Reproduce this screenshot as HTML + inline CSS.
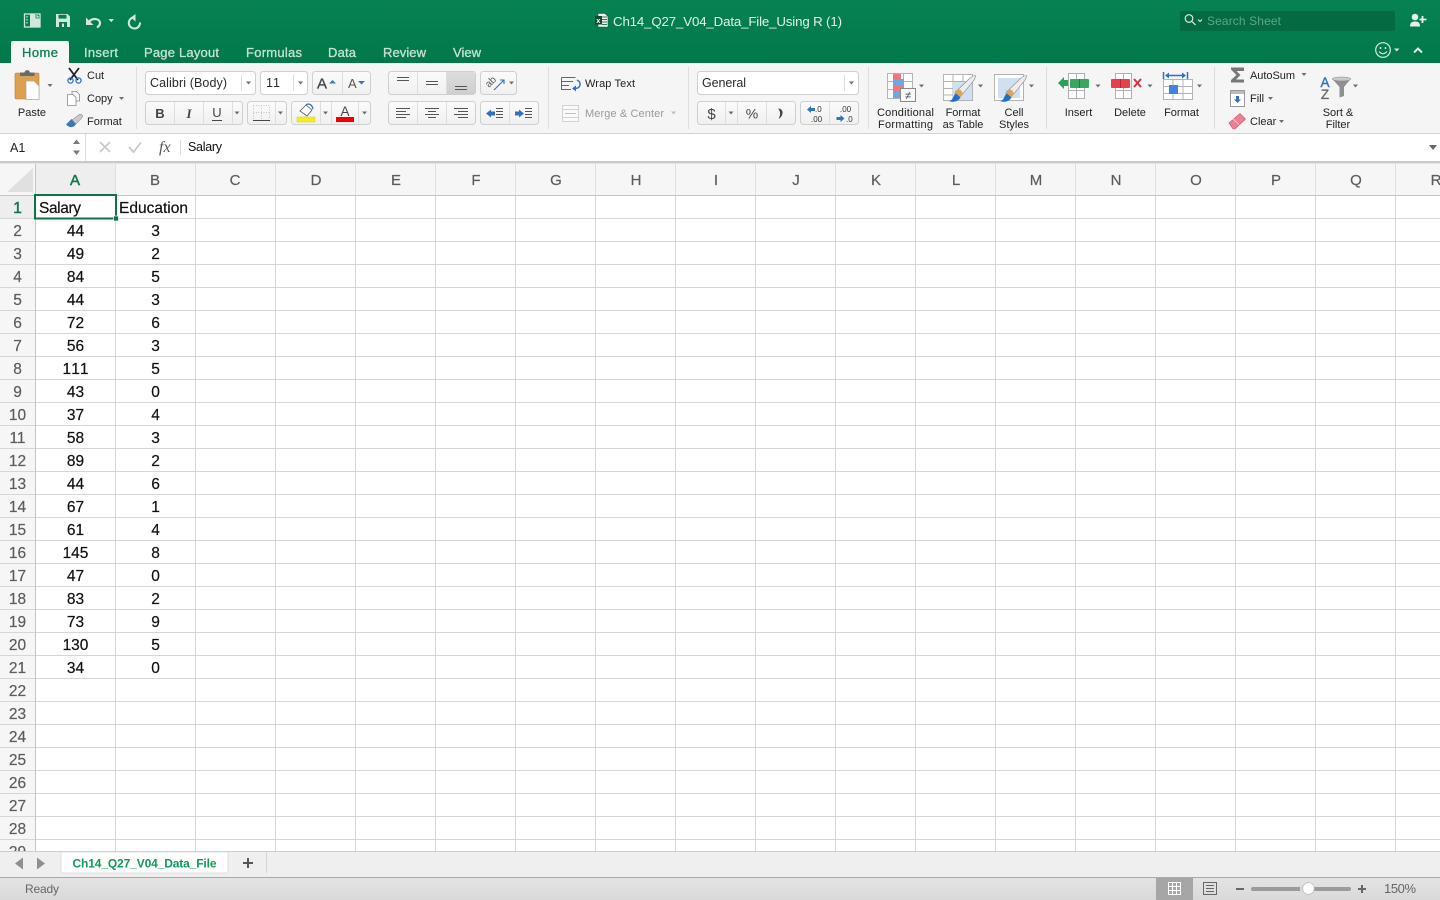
<!DOCTYPE html>
<html><head><meta charset="utf-8"><title>Ch14_Q27_V04_Data_File_Using R (1)</title>
<style>
html,body{margin:0;padding:0;background:#fff;width:1440px;height:900px;overflow:hidden}
svg{display:block;font-family:"Liberation Sans",sans-serif}
.t{font-size:11px;fill:#222}
.c{font-size:11px;fill:#222;text-anchor:middle}
.tab{font-size:13px;fill:#c6e2d2;stroke:#c6e2d2;stroke-width:.3}
.btn{fill:url(#bg);stroke:#cfcfcf}
.car{fill:#6e6e6e}
.rn{font-size:15.5px;fill:#5c5c5c;stroke:#5c5c5c;stroke-width:.2;text-anchor:middle}
.ch{font-size:15px;fill:#5c5c5c;stroke:#5c5c5c;stroke-width:.2;text-anchor:middle}
.v{font-size:15.5px;fill:#111;stroke:#111;stroke-width:.2;text-anchor:middle}
.sep{stroke:#dedede}
</style></head><body>
<svg width="1440" height="900" viewBox="0 0 1440 900" xmlns="http://www.w3.org/2000/svg">
<defs>
<linearGradient id="gr" x1="0" y1="0" x2="0" y2="1"><stop offset="0" stop-color="#068251"/><stop offset="1" stop-color="#02784a"/></linearGradient>
<linearGradient id="bg" x1="0" y1="0" x2="0" y2="1"><stop offset="0" stop-color="#fbfbfb"/><stop offset="1" stop-color="#f0f0f0"/></linearGradient>
<linearGradient id="st" x1="0" y1="0" x2="0" y2="1"><stop offset="0" stop-color="#e4e4e4"/><stop offset="1" stop-color="#d9d9d9"/></linearGradient>
<linearGradient id="sel" x1="0" y1="0" x2="0" y2="1"><stop offset="0" stop-color="#dcdcdc"/><stop offset="1" stop-color="#cfcfcf"/></linearGradient>
<pattern id="grid" x="35" y="195" width="80" height="23" patternUnits="userSpaceOnUse"><path d="M.5 0V23M0 .5H80" stroke="#d6d6d6" fill="none"/></pattern>
<pattern id="rowh" x="0" y="195" width="35" height="23" patternUnits="userSpaceOnUse"><path d="M0 .5H35" stroke="#d6d6d6" fill="none"/></pattern>
<pattern id="colh" x="35" y="164" width="80" height="31" patternUnits="userSpaceOnUse"><path d="M.5 0V31" stroke="#dedede" fill="none"/></pattern>
<clipPath id="gc"><rect x="0" y="164" width="1440" height="687"/></clipPath>
</defs>

<!-- Title bar -->
<rect width="1440" height="63" fill="url(#gr)"/>
<rect x="24.500" y="14" width="15.500" height="13" fill="none" stroke="#d3e8dc" stroke-width="1.300"/>
<path d="M30 14H36L40 18V27H30Z" fill="#d3e8dc"/><path d="M36 14V18H40" fill="none" stroke="#047d4d" stroke-width=".8"/>
<path d="M27 16v1.500M27 19v1.500M27 22v1.500" stroke="#d3e8dc" stroke-width="1.200"/>
<path d="M56 14H67.500L70 16.500V27H56Z" fill="#d3e8dc"/><rect x="58.500" y="14.800" width="8" height="3.800" fill="#047d4d"/><rect x="59" y="22" width="8" height="5" fill="#047d4d"/><rect x="62" y="23.500" width="2" height="3.500" fill="#d3e8dc"/>
<path d="M86 17.500V25H93.500Z" fill="#d3e8dc"/><path d="M89 22C92 17.500 99.500 18.500 100 22.500C100.300 25 98.500 26.500 97 27.500" fill="none" stroke="#d3e8dc" stroke-width="2.200"/>
<path d="M108.500 19h5.500l-2.750 3.200z" fill="#d3e8dc"/>
<path d="M133 17.500A5.600 5.600 0 1 0 140 22.500" fill="none" stroke="#d3e8dc" stroke-width="2"/><path d="M135.500 14V21.500L131 17.500Z" fill="#d3e8dc"/>

<path d="M598 13.500H605L608 16.500V27H598Z" fill="#f5f5f5" stroke="#1b5e3d" stroke-width=".6"/><path d="M602 17h5M602 19.500h5M602 22h5M602 24.500h5" stroke="#2b7a52"/><rect x="595" y="16" width="7" height="8.500" fill="#0b4a2c"/><text x="596.300" y="23" font-size="7.500" fill="#fff" font-weight="bold">x</text>
<text x="613" y="26" font-size="13.300" fill="#e3f1e9" textLength="229">Ch14_Q27_V04_Data_File_Using R (1)</text>

<rect x="1180" y="11" width="215" height="20" rx="2" fill="#046a41"/>
<circle cx="1189" cy="18.500" r="3.800" fill="none" stroke="#e4f1ea" stroke-width="1.100"/><path d="M1192 21.500L1195.500 25" stroke="#e4f1ea" stroke-width="1.200"/><path d="M1198 19.500l2 2 2-2" fill="none" stroke="#e4f1ea"/>
<text x="1207" y="25" font-size="12" fill="#5ba982" textLength="74">Search Sheet</text>
<circle cx="1415" cy="17" r="3.300" fill="#e4f1ea"/><path d="M1410 26.500C1410 22.500 1412 21.500 1415 21.500C1418 21.500 1420 22.500 1420 26.500Z" fill="#e4f1ea"/><path d="M1422.500 16V23M1419.500 19.500H1426.500" stroke="#e4f1ea" stroke-width="1.800"/>

<!-- Tabs -->
<path d="M11 63V43Q11 41 13 41H67Q69 41 69 43V63Z" fill="#f6f6f6"/>
<text x="22" y="57" font-size="13" fill="#0f8050" stroke="#0f8050" stroke-width=".3" textLength="36">Home</text>
<text class="tab" x="84" y="57" textLength="34">Insert</text>
<text class="tab" x="144" y="57" textLength="75">Page Layout</text>
<text class="tab" x="246" y="57" textLength="56">Formulas</text>
<text class="tab" x="328" y="57" textLength="28">Data</text>
<text class="tab" x="383" y="57" textLength="43">Review</text>
<text class="tab" x="453" y="57" textLength="28">View</text>
<circle cx="1383" cy="50" r="7.300" fill="none" stroke="#d8ebe1" stroke-width="1.200"/><circle cx="1380.500" cy="48" r="1" fill="#d8ebe1"/><circle cx="1385.500" cy="48" r="1" fill="#d8ebe1"/><path d="M1379 51.500Q1383 56 1387 51.500" fill="none" stroke="#d8ebe1" stroke-width="1.100"/>
<path d="M1394 48.500h5.500l-2.750 3z" fill="#d8ebe1"/>
<path d="M1414 52.500L1418 48.500L1422 52.500" fill="none" stroke="#e4f1ea" stroke-width="2"/>

<!-- Ribbon -->
<rect y="63" width="1440" height="70" fill="#f5f5f5"/>
<rect x="0" y="133" width="1440" height="1" fill="#d2d2d2"/>
<path d="M136.500 67V129M548.500 67V129M688.500 67V129M868.500 67V129M1046.500 67V129M1214.500 67V129" class="sep"/>

<!-- Paste -->
<rect x="15" y="73" width="24" height="26" rx="1.500" fill="#dd9f52" stroke="#b57f3e" stroke-width=".6"/>
<path d="M20 76V72.500H24.500C25 69.300 29.500 69.300 30 72.500H34.500V76Z" fill="#6a6a6a"/>
<path d="M26 81H34L39 86V99.500H26Z" fill="#fff" stroke="#aaa" stroke-width=".7"/>
<path d="M47.500 84h5l-2.500 3z" class="car"/>
<text class="c" x="32" y="116">Paste</text>
<!-- Cut -->
<path d="M69 68L78 80M79 68L70 80" stroke="#222" stroke-width="1.800"/>
<circle cx="70.500" cy="80.500" r="2.600" fill="none" stroke="#2f72c4" stroke-width="1.300"/><circle cx="78.500" cy="80.500" r="2.600" fill="none" stroke="#2f72c4" stroke-width="1.300"/>
<text class="t" x="87" y="79">Cut</text>
<path d="M72 94.500V91.500H76.500L79.500 94.500V101H76" fill="#f9f9f9" stroke="#8a8a8a" stroke-width=".8"/><path d="M67.500 94.500H73L76 97.500V105.500H67.500Z" fill="#fff" stroke="#8a8a8a" stroke-width=".8"/>
<text class="t" x="87" y="102">Copy</text><path d="M119 97h5l-2.500 3z" class="car"/>
<path d="M72 120L79 114.500Q81 113.500 82.500 115.500Q82.500 117.500 81 119L75.500 124.500Z" fill="#c9c9c9" stroke="#777" stroke-width=".5"/><path d="M66 124.500L71.500 119L76 124C74 127.500 70 128.500 66 124.500Z" fill="#3a78bd"/>
<text class="t" x="87" y="125">Format</text>

<!-- Font -->
<rect class="btn" x="145.500" y="71.500" width="110" height="23" rx="3" style="fill:#fff"/><path d="M241.500 75V91" class="sep"/>
<text x="150" y="87" font-size="12.500" fill="#2a2a2a" textLength="77">Calibri (Body)</text><path d="M246 81.500h5l-2.500 3z" class="car"/>
<rect class="btn" x="260.500" y="71.500" width="47" height="23" rx="3" style="fill:#fff"/><path d="M293.500 75V91" class="sep"/>
<text x="266" y="87" font-size="12.500" fill="#2a2a2a" textLength="14">11</text><path d="M298 81.500h5l-2.500 3z" class="car"/>
<rect class="btn" x="312.500" y="71.500" width="58" height="23" rx="3"/><path d="M342.500 72V94" class="sep"/>
<text x="317" y="88.500" font-size="15" fill="#444" stroke="#444" stroke-width=".3">A</text><path d="M329 83.500h7l-3.500-3.500z" fill="#3a78bd"/>
<text x="348" y="88" font-size="13" fill="#555">A</text><path d="M358 81h7l-3.500 3.500z" fill="#3a78bd"/>
<rect class="btn" x="145.500" y="101.500" width="97" height="23" rx="3"/><path d="M174.500 102V124M203.500 102V124M232.500 102V124" class="sep"/>
<text x="160" y="118" font-size="13" font-weight="bold" fill="#444" text-anchor="middle">B</text>
<text x="189" y="118" font-size="13" font-style="italic" fill="#444" text-anchor="middle" font-family="Liberation Serif" font-weight="bold">I</text>
<text x="217" y="117" font-size="13" fill="#444" text-anchor="middle">U</text><path d="M212 120.500H222" stroke="#444"/>
<path d="M234.500 111.500h5l-2.500 3z" class="car"/>
<rect class="btn" x="247.500" y="101.500" width="39" height="23" rx="3"/><path d="M275.500 102V124" class="sep"/>
<path d="M253.500 105.500H269.500V119M253.500 105.500V119M261.500 105.500V119M253.500 112.500H269.500" stroke="#c4c4c4" stroke-dasharray="1 1.500" fill="none"/><path d="M253 120.500H270" stroke="#444"/>
<path d="M278 111.500h5l-2.500 3z" class="car"/>
<rect class="btn" x="291.500" y="101.500" width="79" height="23" rx="3"/><path d="M320.500 102V124M331.500 102V124M358.500 102V124" class="sep"/>
<path d="M300 111L306 105L312 110L307 116Z" fill="#fff" stroke="#555" stroke-width=".8"/><path d="M306 105C308 103 312 104 313 109" fill="none" stroke="#2f72c4" stroke-width="1.300"/>
<rect x="297" y="117" width="18" height="5" fill="#f5ee1a" stroke="#d0cb30" stroke-width=".5"/>
<path d="M323 111.500h5l-2.500 3z" class="car"/>
<text x="345" y="116" font-size="13.500" fill="#444" text-anchor="middle">A</text><rect x="336" y="117" width="18" height="5" fill="#f20000"/>
<path d="M362 111.500h5l-2.500 3z" class="car"/>

<!-- Alignment -->
<rect class="btn" x="388.500" y="71.500" width="87" height="23" rx="3"/>
<rect x="446" y="72" width="29" height="22" fill="url(#sel)"/>
<path d="M417.500 72V94M446.500 72V94" class="sep"/>
<path d="M397 78.500H409M397 81.500H409M426 82.500H438M426 85.500H438M455 87.500H467M455 90.500H467" stroke="#555" transform="translate(0 -1)"/>
<rect class="btn" x="480.500" y="71.500" width="36" height="23" rx="3"/>
<text x="0" y="0" font-size="10" fill="#555" transform="translate(489 88) rotate(-45)">ab</text><path d="M494 90L504 80M500 80H504V84" stroke="#2f72c4" fill="none" stroke-width="1.100"/><path d="M509 81.500h5l-2.500 3z" class="car"/>
<rect class="btn" x="388.500" y="101.500" width="87" height="23" rx="3"/><path d="M417.500 102V124M446.500 102V124" class="sep"/>
<path d="M396 108.500H410M396 111.500H406M396 114.500H410M396 117.500H406M425 108.500H439M428 111.500H436M425 114.500H439M428 117.500H436M454 108.500H468M458 111.500H468M454 114.500H468M458 117.500H468" stroke="#555"/>
<rect class="btn" x="480.500" y="101.500" width="58" height="23" rx="3"/><path d="M509.500 102V124" class="sep"/>
<path d="M486 113.500L491 109.500V117.500Z M491 111.500H495V115.500H491Z" fill="#2f72c4"/><path d="M496 109.500H503M496 112.500H503M496 115.500H503M496 118.500H503" stroke="#555" transform="translate(0 -1)"/>
<path d="M522 113.500L517 109.500V117.500Z M513 111.500H517V115.500H513Z" fill="#2f72c4" transform="translate(2 0)"/><path d="M525 109.500H532M525 112.500H532M525 115.500H532M525 118.500H532" stroke="#555" transform="translate(0 -1)"/>

<!-- Wrap / merge -->
<path d="M561.500 77.500H575.500M561.500 77.500V89.500H571M561.500 81.500H573M561.500 85.500H569" stroke="#666" fill="none"/><path d="M577 80C581.500 82 581 88 575.500 88.500" stroke="#2f72c4" stroke-width="1.500" fill="none"/><path d="M572 88.500L576 85.500V91.500Z" fill="#2f72c4"/>
<text class="t" x="585" y="87" textLength="50">Wrap Text</text>
<path d="M562.500 105.500H578.500V121.500H562.500ZM562.500 109.500H578.500M562.500 117.500H578.500" stroke="#d2d2d2" fill="#fafafa"/><path d="M565 113.500H576" stroke="#a8c4e2"/>
<text x="585" y="117" font-size="11" fill="#9a9a9a" textLength="79">Merge &amp; Center</text><path d="M671 111.500h5l-2.500 3z" fill="#bdbdbd"/>

<!-- Number -->
<rect class="btn" x="697.500" y="71.500" width="161" height="23" rx="3" style="fill:#fff"/><path d="M844.500 75V91" class="sep"/>
<text x="702" y="87" font-size="12.500" fill="#2a2a2a" textLength="44">General</text><path d="M849 81.500h5l-2.500 3z" class="car"/>
<rect class="btn" x="697.500" y="101.500" width="98" height="23" rx="3"/><path d="M725.500 102V124M737.500 102V124M766.500 102V124" class="sep"/>
<text x="711.500" y="119" font-size="15" fill="#444" text-anchor="middle">$</text><path d="M728.500 111.500h5l-2.500 3z" class="car"/>
<text x="752" y="118.500" font-size="14" fill="#444" text-anchor="middle">%</text>
<path d="M778 108.500C784 108.500 784 116 778.500 119C780.500 115 781 112 778 108.500Z" fill="#444"/>
<rect class="btn" x="800.500" y="101.500" width="58" height="23" rx="3"/><path d="M829.500 102V124" class="sep"/>
<path d="M807 109.500L811 106V113ZM811 108H815V111H811Z" fill="#2f72c4"/><text x="815" y="112" font-size="8" fill="#333">.0</text><text x="811" y="122" font-size="8" fill="#333">.00</text>
<text x="840" y="112" font-size="8" fill="#333">.00</text><path d="M845 118.500L841 115V122ZM837 117H841V120H837Z" fill="#2f72c4" transform="translate(-.5 0)"/><text x="846" y="122" font-size="8" fill="#333">.0</text>

<!-- Conditional formatting -->
<path d="M887.500 73.500H912.500V98.500H887.500ZM887.500 81.500H912.500M887.500 89.500H912.500M895.500 73.500V98.500M903.500 73.500V98.500" fill="#fff" stroke="#b4b4b4"/>
<rect x="893" y="74" width="8" height="5" fill="#f4737e"/><rect x="893" y="79" width="11" height="7" fill="#6aa9e6"/><rect x="893" y="86" width="11" height="6" fill="#f4737e"/><rect x="893" y="92" width="7" height="6" fill="#6aa9e6"/>
<rect x="900.500" y="88.500" width="15" height="13" fill="#f7f7f7" stroke="#8a8a8a"/><text x="908" y="99" font-size="11" fill="#444" text-anchor="middle">≠</text>
<path d="M919 84.500h5l-2.500 3z" class="car"/>
<text class="c" x="905.500" y="116" textLength="57">Conditional</text><text class="c" x="905.500" y="128" textLength="55">Formatting</text>
<!-- Format as table -->
<path d="M943.500 74.500H972.500V100.500H943.500ZM943.500 81.500H972.500M943.500 88.500H972.500M943.500 95H972.500M953 74.500V100.500M963 74.500V100.500" fill="#fff" stroke="#b4b4b4"/><rect x="953" y="82" width="19" height="18" fill="#cfe0f3"/>
<path d="M956 91.500L969.500 78.500Q973 75.500 975.500 75.500Q975.500 78 973 81.500L961 96Z" fill="#ececec" stroke="#888" stroke-width=".6"/><circle cx="958.500" cy="93.500" r="4" fill="#dda552"/><path d="M949 101C953.500 100.500 953 95 956 93.500L960.500 97.500C958.500 101 953.500 103 949 101Z" fill="#1f6fd0"/>
<path d="M978 84.500h5l-2.500 3z" class="car"/>
<text class="c" x="963" y="116">Format</text><text class="c" x="963" y="128">as Table</text>
<!-- Cell styles -->
<path d="M994.500 74.500H1023.500V100.500H994.500Z" fill="#fff" stroke="#b4b4b4"/><rect x="998" y="78" width="22" height="20" fill="#cfe0f3"/>
<path d="M1007 91.500L1020.500 78.500Q1024 75.500 1026.500 75.500Q1026.500 78 1024 81.500L1012 96Z" fill="#ececec" stroke="#888" stroke-width=".6"/><circle cx="1009.500" cy="93.500" r="4" fill="#dda552"/><path d="M1000 101C1004.500 100.500 1004 95 1007 93.500L1011.500 97.500C1009.500 101 1004.500 103 1000 101Z" fill="#1f6fd0"/>
<path d="M1029 84.500h5l-2.500 3z" class="car"/>
<text class="c" x="1014" y="116">Cell</text><text class="c" x="1014" y="128">Styles</text>

<!-- Insert -->
<path d="M1068.500 73.500H1084.500V98.500H1068.500ZM1068.500 90.500H1084.500M1076.500 73.500V98.500" fill="#fff" stroke="#b0b0b0"/>
<path d="M1058 83L1064 77V80H1068V86H1064V89Z" fill="#27a25a"/><rect x="1070" y="79" width="19" height="9" rx="1" fill="#3aa75d"/><path d="M1079.500 79V88" stroke="#1e8043"/>
<path d="M1095.500 84.500h5l-2.500 3z" class="car"/>
<text class="c" x="1078.500" y="116">Insert</text>
<!-- Delete -->
<path d="M1115.500 73.500H1131.500V98.500H1115.500ZM1115.500 90.500H1131.500M1123.500 73.500V98.500" fill="#fff" stroke="#b0b0b0"/>
<rect x="1111" y="79" width="19" height="9" rx="1" fill="#e5404c"/><path d="M1120.500 79V88" stroke="#b92530"/>
<path d="M1134 79L1141 87M1141 79L1134 87" stroke="#d8303c" stroke-width="2"/>
<path d="M1147.500 84.500h5l-2.500 3z" class="car"/>
<text class="c" x="1130" y="116">Delete</text>
<!-- Format cells -->
<path d="M1163.500 72V79M1187.500 72V79" stroke="#2f72c4" stroke-width="1.500"/><path d="M1167 75.500H1184" stroke="#2f72c4" stroke-width="1.500"/><path d="M1165 75.500L1169 72.500V78.500ZM1186 75.500L1182 72.500V78.500Z" fill="#2f72c4"/>
<path d="M1163.500 79.500H1192.500V99.500H1163.500ZM1163.500 86.500H1192.500M1163.500 93.500H1192.500M1173 79.500V99.500M1183 79.500V99.500" fill="#fff" stroke="#b4b4b4"/>
<rect x="1169" y="85" width="9" height="9" fill="#3f86d6"/>
<path d="M1197 84.500h5l-2.500 3z" class="car"/>
<text class="c" x="1181.500" y="116">Format</text>

<!-- Editing -->
<path d="M1231 67.500H1244V71H1236.500L1240.500 75L1236 79.500H1244V82.500H1231V80L1236.500 75L1231 69.500Z" fill="#777"/>
<text class="t" x="1250" y="79" textLength="45">AutoSum</text><path d="M1301.500 73h5l-2.500 3z" class="car"/>
<rect x="1230.500" y="90.500" width="14" height="16" fill="#fff" stroke="#999"/><rect x="1231" y="91" width="13" height="3" fill="#bbb"/><path d="M1237.500 103L1234 99.500H1236V96H1239V99.500H1241Z" fill="#2f72c4"/>
<text class="t" x="1250" y="102">Fill</text><path d="M1268 97h5l-2.500 3z" class="car"/>
<path d="M1229 123L1240 113.500L1245.500 119L1235 129H1233Z" fill="#ed7f92" stroke="#c2566a" stroke-width=".6"/><path d="M1233 119L1239 124.500" stroke="#f7c1cb"/>
<text class="t" x="1250" y="125">Clear</text><path d="M1279 120h5l-2.500 3z" class="car"/>
<text x="1325" y="87" font-size="13.500" fill="#2f72c4" text-anchor="middle" stroke="#2f72c4" stroke-width=".4">A</text><text x="1325" y="99" font-size="13.500" fill="#666" text-anchor="middle" stroke="#666" stroke-width=".3">Z</text>
<path d="M1332 78.500H1351L1344 87V96L1339.500 97.500V87Z" fill="#8f8f8f"/><ellipse cx="1341.500" cy="79" rx="9.500" ry="2" fill="#c9c9c9" stroke="#888" stroke-width=".5"/>
<path d="M1353 84.500h5l-2.500 3z" class="car"/>
<text class="c" x="1338" y="116">Sort &amp;</text><text class="c" x="1338" y="128">Filter</text>

<!-- Formula bar -->
<rect y="134" width="1440" height="27" fill="#fff"/>
<rect x="85" y="134" width="1" height="27" fill="#dcdcdc"/>
<rect x="0" y="161" width="1440" height="2" fill="#c9c9c9"/>
<rect x="0" y="163" width="1440" height="1" fill="#e6e6e6"/>
<text x="10" y="152" font-size="12.500" fill="#222">A1</text>
<path d="M73 144L76.500 139.500L80 144ZM73 150.500H80L76.500 155Z" fill="#7a7a7a"/>
<path d="M100 142L110 152M110 142L100 152" stroke="#c8c8c8" stroke-width="1.700"/>
<path d="M129 147L133.500 152L141 142.500" fill="none" stroke="#c8c8c8" stroke-width="1.700"/>
<text x="159" y="152" font-size="16" fill="#555" font-family="Liberation Serif" font-style="italic">fx</text>
<rect x="180" y="140" width="1" height="15" fill="#dcdcdc"/>
<text x="188" y="151" font-size="12.500" fill="#111" textLength="34">Salary</text>
<path d="M1429 145h8l-4 5z" fill="#666"/>

<!-- Sheet -->
<g clip-path="url(#gc)">
<rect x="0" y="164" width="1440" height="31" fill="#f6f6f6"/>
<rect x="35" y="164" width="80" height="31" fill="#eeeeee"/>
<rect x="35" y="164" width="1405" height="31" fill="url(#colh)"/>
<rect x="0" y="195" width="35" height="656" fill="#f6f6f6"/>
<rect x="0" y="195" width="35" height="23" fill="#eeeeee"/>
<rect x="0" y="195" width="35" height="656" fill="url(#rowh)"/>
<rect x="35" y="195" width="1405" height="656" fill="url(#grid)"/>
<rect x="0" y="195" width="1440" height="1" fill="#c4c4c4"/>
<rect x="35" y="164" width="1" height="687" fill="#c4c4c4"/>
<path d="M33 168V192H7Z" fill="#e0e0e0"/>

<text class="ch" x="75" y="185" style="fill:#0f7a4a;stroke:#0f7a4a;stroke-width:.5">A</text>
<text class="ch" x="155" y="185">B</text><text class="ch" x="235" y="185">C</text><text class="ch" x="316" y="185">D</text><text class="ch" x="396" y="185">E</text><text class="ch" x="476" y="185">F</text><text class="ch" x="556" y="185">G</text><text class="ch" x="636" y="185">H</text><text class="ch" x="716" y="185">I</text><text class="ch" x="796" y="185">J</text><text class="ch" x="876" y="185">K</text><text class="ch" x="956" y="185">L</text><text class="ch" x="1036" y="185">M</text><text class="ch" x="1116" y="185">N</text><text class="ch" x="1196" y="185">O</text><text class="ch" x="1276" y="185">P</text><text class="ch" x="1356" y="185">Q</text><text class="ch" x="1436" y="185">R</text>

<text class="rn" x="17.500" y="213" style="fill:#0f7a4a;stroke:#0f7a4a;stroke-width:.5">1</text>
<text class="rn" x="17.500" y="236">2</text><text class="rn" x="17.500" y="259">3</text><text class="rn" x="17.500" y="282">4</text><text class="rn" x="17.500" y="305">5</text><text class="rn" x="17.500" y="328">6</text><text class="rn" x="17.500" y="351">7</text><text class="rn" x="17.500" y="374">8</text><text class="rn" x="17.500" y="397">9</text><text class="rn" x="17.500" y="420">10</text><text class="rn" x="17.500" y="443">11</text><text class="rn" x="17.500" y="466">12</text><text class="rn" x="17.500" y="489">13</text><text class="rn" x="17.500" y="512">14</text><text class="rn" x="17.500" y="535">15</text><text class="rn" x="17.500" y="558">16</text><text class="rn" x="17.500" y="581">17</text><text class="rn" x="17.500" y="604">18</text><text class="rn" x="17.500" y="627">19</text><text class="rn" x="17.500" y="650">20</text><text class="rn" x="17.500" y="673">21</text><text class="rn" x="17.500" y="696">22</text><text class="rn" x="17.500" y="719">23</text><text class="rn" x="17.500" y="742">24</text><text class="rn" x="17.500" y="765">25</text><text class="rn" x="17.500" y="788">26</text><text class="rn" x="17.500" y="811">27</text><text class="rn" x="17.500" y="834">28</text><text class="rn" x="17.500" y="857">29</text>

<text x="39" y="213" font-size="15.500" fill="#111" stroke="#111" stroke-width=".2" textLength="42">Salary</text>
<text x="119" y="213" font-size="15.500" fill="#111" stroke="#111" stroke-width=".2" textLength="69">Education</text>
<text class="v" x="75.500" y="236">44</text><text class="v" x="155.500" y="236">3</text>
<text class="v" x="75.500" y="259">49</text><text class="v" x="155.500" y="259">2</text>
<text class="v" x="75.500" y="282">84</text><text class="v" x="155.500" y="282">5</text>
<text class="v" x="75.500" y="305">44</text><text class="v" x="155.500" y="305">3</text>
<text class="v" x="75.500" y="328">72</text><text class="v" x="155.500" y="328">6</text>
<text class="v" x="75.500" y="351">56</text><text class="v" x="155.500" y="351">3</text>
<text class="v" x="75.500" y="374" textLength="26">111</text><text class="v" x="155.500" y="374">5</text>
<text class="v" x="75.500" y="397">43</text><text class="v" x="155.500" y="397">0</text>
<text class="v" x="75.500" y="420">37</text><text class="v" x="155.500" y="420">4</text>
<text class="v" x="75.500" y="443">58</text><text class="v" x="155.500" y="443">3</text>
<text class="v" x="75.500" y="466">89</text><text class="v" x="155.500" y="466">2</text>
<text class="v" x="75.500" y="489">44</text><text class="v" x="155.500" y="489">6</text>
<text class="v" x="75.500" y="512">67</text><text class="v" x="155.500" y="512">1</text>
<text class="v" x="75.500" y="535">61</text><text class="v" x="155.500" y="535">4</text>
<text class="v" x="75.500" y="558">145</text><text class="v" x="155.500" y="558">8</text>
<text class="v" x="75.500" y="581">47</text><text class="v" x="155.500" y="581">0</text>
<text class="v" x="75.500" y="604">83</text><text class="v" x="155.500" y="604">2</text>
<text class="v" x="75.500" y="627">73</text><text class="v" x="155.500" y="627">9</text>
<text class="v" x="75.500" y="650">130</text><text class="v" x="155.500" y="650">5</text>
<text class="v" x="75.500" y="673">34</text><text class="v" x="155.500" y="673">0</text>

<rect x="35" y="195" width="81" height="23.500" fill="none" stroke="#107048" stroke-width="2"/>
<rect x="113.500" y="216" width="5" height="5" fill="#107048" stroke="#fff" stroke-width=".7"/>
</g>

<!-- Sheet tabs -->
<rect x="0" y="851" width="1440" height="26" fill="#efefef"/>
<rect x="0" y="851" width="1440" height="1" fill="#cdcdcd"/>
<path d="M23 857.500V869.500L15 863.500Z" fill="#8f8f8f"/><path d="M37 857.500V869.500L45 863.500Z" fill="#8f8f8f"/>
<path d="M61 852H228V871Q228 873 226 873H63Q61 873 61 871Z" fill="#fff" stroke="#d8d8d8" stroke-width=".8"/>
<text x="144.500" y="867.500" font-size="12" font-weight="bold" fill="#0f9a5a" text-anchor="middle" textLength="144">Ch14_Q27_V04_Data_File</text>
<path d="M248 858V868M243 863H253" stroke="#555" stroke-width="2"/>
<rect x="266" y="852" width="1" height="21" fill="#d5d5d5"/>

<!-- Status bar -->
<rect x="0" y="877" width="1440" height="23" fill="url(#st)"/>
<rect x="0" y="877" width="1440" height="1" fill="#a9a9a9"/>
<text x="25" y="893" font-size="12" fill="#666" textLength="34">Ready</text>
<rect x="1156" y="878" width="37" height="22" fill="#a6a6a6"/>
<path d="M1168.500 882.500H1180.500V894.500H1168.500ZM1168.500 886.500H1180.500M1168.500 890.500H1180.500M1172.500 882.500V894.500M1176.500 882.500V894.500" fill="none" stroke="#fff"/>
<path d="M1203.500 882.500H1216.500V894.500H1203.500Z" fill="none" stroke="#666"/><path d="M1206 885.500H1214M1206 888.500H1214M1206 891.500H1214" stroke="#666"/>
<path d="M1236 889H1244" stroke="#666" stroke-width="2"/>
<rect x="1251" y="887" width="100" height="4" rx="2" fill="#9b9b9b"/>
<rect x="1300" y="886" width="3" height="6" fill="#d8d8d8"/>
<circle cx="1308.500" cy="888.500" r="5.800" fill="#fff" stroke="#b5b5b5" stroke-width=".7"/>
<path d="M1362 885V893M1358 889H1366" stroke="#666" stroke-width="2"/>
<text x="1384" y="893" font-size="13" fill="#666" textLength="32">150%</text>
</svg>
</body></html>
